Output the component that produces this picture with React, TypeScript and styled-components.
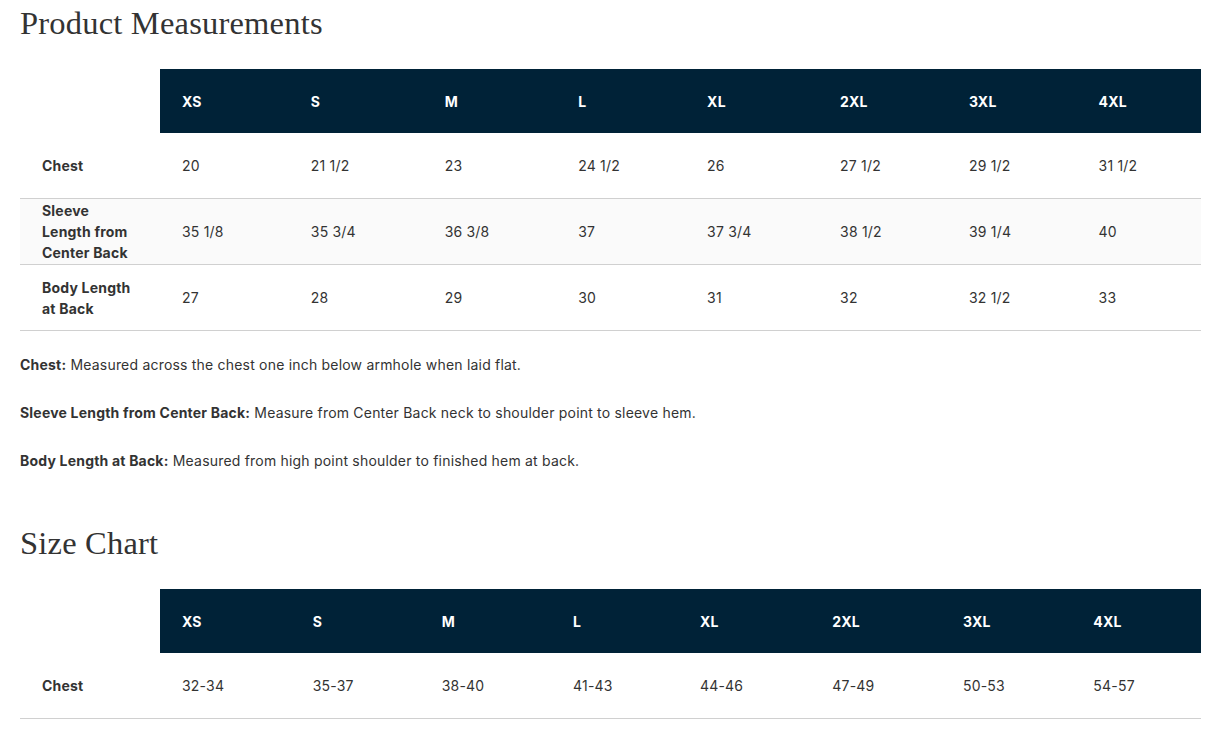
import { createGlobalStyle, styled } from "styled-components";

const sizes = ["XS", "S", "M", "L", "XL", "2XL", "3XL", "4XL"];

const measurements = [
  { label: "Chest", values: ["20", "21 1/2", "23", "24 1/2", "26", "27 1/2", "29 1/2", "31 1/2"] },
  {
    label: "Sleeve Length from Center Back",
    values: ["35 1/8", "35 3/4", "36 3/8", "37", "37 3/4", "38 1/2", "39 1/4", "40"],
  },
  { label: "Body Length at Back", values: ["27", "28", "29", "30", "31", "32", "32 1/2", "33"] },
];

const chart = [{ label: "Chest", values: ["32-34", "35-37", "38-40", "41-43", "44-46", "47-49", "50-53", "54-57"] }];

const notes = [
  { term: "Chest:", text: "Measured across the chest one inch below armhole when laid flat." },
  { term: "Sleeve Length from Center Back:", text: "Measure from Center Back neck to shoulder point to sleeve hem." },
  { term: "Body Length at Back:", text: "Measured from high point shoulder to finished hem at back." },
];

function SizeTable({ rows }: any) {
  return (
    <Table>
      <thead>
        <tr>
          <Corner />
          {sizes.map((size) => (
            <HeadCell key={size}>{size}</HeadCell>
          ))}
        </tr>
      </thead>
      <tbody>
        {rows.map((row: any) => (
          <Row key={row.label}>
            <RowLabel>{row.label}</RowLabel>
            {row.values.map((value: string, i: number) => (
              <Cell key={i}>{value}</Cell>
            ))}
          </Row>
        ))}
      </tbody>
    </Table>
  );
}

export default function App() {
  return (
    <>
      <GlobalStyle />
      <Page>
        <Heading>Product Measurements</Heading>
        <SizeTable rows={measurements} />

        <Notes>
          {notes.map((note) => (
            <Note key={note.term}>
              <strong>{note.term}</strong> {note.text}
            </Note>
          ))}
        </Notes>

        <Heading $top={52}>Size Chart</Heading>
        <SizeTable rows={chart} />
      </Page>
    </>
  );
}

const GlobalStyle = createGlobalStyle`
  body {
    margin: 0;
    background: #fff;
    color: #333;
    font-family: Inter, "Noto Sans", sans-serif;
    letter-spacing: 0.2px;
  }
`;

const Page = styled.main`
  padding: 0 17px 0 20px;
`;

const Heading = styled.h2<{ $top?: number }>`
  margin: ${(p) => p.$top ?? 3}px 0 26px;
  font-family: "Liberation Serif", "DejaVu Serif", serif;
  font-weight: 400;
  font-size: 32.5px;
  line-height: 40px;
  letter-spacing: 0.2px;
  color: #333;
`;

const Table = styled.table`
  width: 100%;
  border-collapse: collapse;
  font-size: 14px;
  line-height: 21px;
`;

const Corner = styled.th`
  width: 90px;
  padding: 0 28px 0 22px;
  background: #fff;
`;

const HeadCell = styled.th`
  height: 64px;
  padding: 0 22px;
  background: #002237;
  color: #fff;
  font-weight: 700;
  text-align: left;
`;

const Row = styled.tr`
  border-bottom: 1px solid #d0d0d0;

  &:nth-child(2) {
    background: #fafafa;
  }
`;

const RowLabel = styled.td`
  width: 90px;
  height: 65px;
  padding: 0 28px 0 22px;
  font-weight: 700;
  color: #333;
`;

const Cell = styled.td`
  height: 65px;
  padding: 0 22px;
  color: #333;
`;

const Notes = styled.div`
  margin-top: 23px;
`;

const Note = styled.p`
  margin: 0 0 27px;
  font-size: 14px;
  line-height: 21px;

  &:last-child {
    margin-bottom: 0;
  }

  strong {
    font-weight: 700;
  }
`;
